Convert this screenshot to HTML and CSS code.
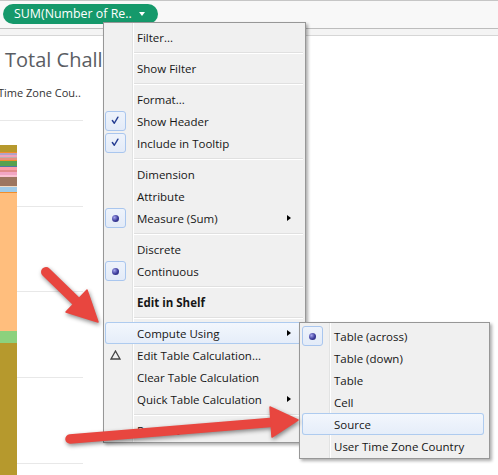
FILE: index.html
```html
<!DOCTYPE html>
<html>
<head>
<meta charset="utf-8">
<link rel="stylesheet" href="styles.css">
</head>
<body>
<div class="page">
  <header class="toolbar">
    <div class="pill"><span class="pill-text">SUM(Number of Re..</span><span class="caret"></span></div>
  </header>
  <div class="band"></div>
  <main class="view">
    <h1 class="title">Total Challenges</h1>
    <div class="subtitle">Time Zone Cou..</div>
    <div class="chart">
      <div class="bar">
        <i style="height:7px;background:#b6992d"></i>
        <i style="height:1px;background:#f28e2b"></i>
        <i style="height:2px;background:#b2a2c6"></i>
        <i style="height:2px;background:#f1a2bd"></i>
        <i style="height:1px;background:#bab0ac"></i>
        <i style="height:2px;background:#e8907f"></i>
        <i style="height:1px;background:#f28e2b"></i>
        <i style="height:5px;background:#59a14f"></i>
        <i style="height:1px;background:#4e79a7"></i>
        <i style="height:3px;background:#ff9da7"></i>
        <i style="height:2px;background:#e28b8b"></i>
        <i style="height:3px;background:#f2a6c4"></i>
        <i style="height:2px;background:#fbc3d4"></i>
        <i style="height:9px;background:#9d7660"></i>
        <i style="height:1px;background:#f3dcc5"></i>
        <i style="height:5px;background:#a0cbe8"></i>
        <i style="height:1px;background:#f28e2b"></i>
        <i style="height:138px;background:#ffbe7d"></i>
        <i style="height:12px;background:#8cd17d"></i>
        <i class="rest" style="background:#b6992d"></i>
      </div>
    </div>
  </main>

  <div class="menu main-menu">
    <div class="item"><span class="icon"></span><span class="label">Filter...</span></div>
    <div class="sep"></div>
    <div class="item"><span class="icon"></span><span class="label">Show Filter</span></div>
    <div class="sep"></div>
    <div class="item"><span class="icon"></span><span class="label">Format...</span></div>
    <div class="item"><span class="icon box"><svg class="check" viewBox="0 0 21 20" width="19" height="18"><path d="M7 9.5 L9.2 12.5 L13.2 5.8"/></svg></span><span class="label">Show Header</span></div>
    <div class="item"><span class="icon box"><svg class="check" viewBox="0 0 21 20" width="19" height="18"><path d="M7 9.5 L9.2 12.5 L13.2 5.8"/></svg></span><span class="label">Include in Tooltip</span></div>
    <div class="sep"></div>
    <div class="item"><span class="icon"></span><span class="label">Dimension</span></div>
    <div class="item"><span class="icon"></span><span class="label">Attribute</span></div>
    <div class="item"><span class="icon box"><span class="dot"></span></span><span class="label">Measure (Sum)</span><span class="sub-arrow"></span></div>
    <div class="sep"></div>
    <div class="item"><span class="icon"></span><span class="label">Discrete</span></div>
    <div class="item"><span class="icon box"><span class="dot"></span></span><span class="label">Continuous</span></div>
    <div class="sep"></div>
    <div class="item"><span class="icon"></span><span class="label bold">Edit in Shelf</span></div>
    <div class="sep"></div>
    <div class="item hover"><span class="icon"></span><span class="label">Compute Using</span><span class="sub-arrow"></span></div>
    <div class="item"><span class="icon"><svg class="delta" viewBox="0 0 11 10" width="11" height="10"><polygon points="5.5,1 10,9 1,9"/></svg></span><span class="label">Edit Table Calculation...</span></div>
    <div class="item"><span class="icon"></span><span class="label">Clear Table Calculation</span></div>
    <div class="item"><span class="icon"></span><span class="label">Quick Table Calculation</span><span class="sub-arrow"></span></div>
    <div class="sep"></div>
    <div class="item"><span class="icon"></span><span class="label">Remove</span></div>
  </div>

  <div class="menu submenu">
    <div class="item"><span class="icon box"><span class="dot"></span></span><span class="label">Table (across)</span></div>
    <div class="item"><span class="icon"></span><span class="label">Table (down)</span></div>
    <div class="item"><span class="icon"></span><span class="label">Table</span></div>
    <div class="item"><span class="icon"></span><span class="label">Cell</span></div>
    <div class="item hover"><span class="icon"></span><span class="label">Source</span></div>
    <div class="item"><span class="icon"></span><span class="label">User Time Zone Country</span></div>
  </div>

  <svg class="arrows" viewBox="0 0 498 475" width="498" height="475">
    <g class="arrow">
      <line x1="46" y1="272" x2="80" y2="305" stroke-width="10"/>
      <polygon points="66,312 87,290 98,322"/>
      <line x1="70" y1="439" x2="276" y2="422" stroke-width="9.5"/>
      <polygon points="270,407 272,437 298,420"/>
    </g>
  </svg>
</div>
</body>
</html>
```

FILE: styles.css
```css
* {
  box-sizing: border-box;
  margin: 0;
  padding: 0;
}

html, body {
  width: 498px;
  height: 475px;
  overflow: hidden;
  background: #fff;
}

body {
  font-family: "Open Sans", "Noto Sans", sans-serif;
}

.page {
  position: relative;
  width: 498px;
  height: 475px;
  overflow: hidden;
}

/* top shelf */
.toolbar {
  height: 29px;
  background: #f8f8f8;
  border-top: 1px solid #c6c6c6;
  border-bottom: 1px solid #bdbdbd;
  padding: 3px 0 0 3px;
  display: flex;
  align-items: flex-start;
}

.pill {
  height: 20px;
  border-radius: 10px;
  background: #15996b;
  color: #fff;
  font-size: 12.4px;
  line-height: 20px;
  padding: 0 13px 0 11px;
  display: flex;
  align-items: center;
  white-space: nowrap;
}

.caret {
  margin-left: 7px;
  width: 0;
  height: 0;
  border-top: 4px solid #fff;
  border-left: 3.5px solid transparent;
  border-right: 3.5px solid transparent;
}

.band {
  height: 7px;
  background: #f4f4f4;
  border-bottom: 1px solid #d6d6d6;
}

/* view */
.view {
  display: flex;
  flex-direction: column;
  height: 440px;
}

.title {
  margin-top: 11px;
  padding-left: 5px;
  font-size: 20px;
  line-height: 26px;
  font-weight: 400;
  color: #5a5d63;
  white-space: nowrap;
}

.subtitle {
  margin-top: 12px;
  margin-left: -2px;
  font-size: 11px;
  line-height: 16px;
  color: #333;
  white-space: nowrap;
}

.chart {
  margin-top: 19px;
  flex: 1;
  display: flex;
  flex-direction: column;
  background-image: repeating-linear-gradient(to bottom, #e8e8e8 0 1px, transparent 1px 85.75px);
  background-size: 83px 100%;
  background-repeat: no-repeat;
}

.bar {
  margin-top: 25px;
  width: 17px;
  flex: 1;
  display: flex;
  flex-direction: column;
}

.bar i {
  display: block;
  flex: none;
}

.bar i.rest {
  flex: 1;
}

/* menus */
.menu {
  position: absolute;
  background-color: #f0f0f0;
  border: 1px solid #979797;
  box-shadow: 2px 2px 3px rgba(0, 0, 0, 0.32);
  font-size: 11.5px;
  color: #161616;
}

.main-menu {
  left: 103px;
  top: 22px;
  width: 203px;
  padding: 3px 0 1px;
  background-image: linear-gradient(to right, transparent 28px, #e2e3e3 28px 29px, #fff 29px 30px, transparent 30px);
}

.submenu {
  left: 299px;
  top: 322px;
  width: 191px;
  padding: 2px 0 1px;
  background-image: linear-gradient(to right, transparent 29px, #e2e3e3 29px 30px, #fff 30px 31px, transparent 31px);
}

.item {
  height: 22px;
  display: flex;
  align-items: center;
  margin: 0 1px;
  border-radius: 3px;
  white-space: nowrap;
}

.submenu .item {
  margin: 0 5px 0 2px;
}

.item.hover {
  background: linear-gradient(#f3f7fd, #e5edf9);
  box-shadow: inset 0 0 0 1px #aecbef;
}

.icon {
  width: 21px;
  height: 20px;
  flex: none;
  display: flex;
  align-items: center;
  justify-content: center;
}

.icon.box {
  border: 1px solid #a9c6ee;
  border-radius: 3px;
  background: linear-gradient(#eef3fb, #e3ebf8);
}

.check path {
  fill: none;
  stroke: #253d92;
  stroke-width: 1.6;
  stroke-linecap: round;
  stroke-linejoin: round;
}

.delta polygon {
  fill: none;
  stroke: #444;
  stroke-width: 1.3;
  stroke-linejoin: miter;
}

.dot {
  width: 7px;
  height: 7px;
  border-radius: 50%;
  background: radial-gradient(circle at 35% 35%, #a5a5ee 0, #3b3b9a 55%, #23236e 100%);
}

.label {
  margin-left: 11px;
}

.label.bold {
  font-weight: 700;
}

.sub-arrow {
  margin-left: auto;
  margin-right: 13px;
  width: 0;
  height: 0;
  border-left: 4px solid #000;
  border-top: 3.5px solid transparent;
  border-bottom: 3.5px solid transparent;
}

.sep {
  height: 9px;
  margin: 0 2px 0 30px;
  background: linear-gradient(to bottom, transparent 4px, #e0e0e0 4px 5px, #fff 5px 6px, transparent 6px);
}

/* annotation arrows */
.arrows {
  position: absolute;
  left: 0;
  top: 0;
  pointer-events: none;
  filter: drop-shadow(1px 2px 2px rgba(0, 0, 0, 0.45));
}

.arrow line {
  stroke: #e8463f;
  stroke-linecap: round;
}

.arrow polygon {
  fill: #e8463f;
  stroke: #e8463f;
  stroke-width: 1.5;
  stroke-linejoin: round;
}
```
